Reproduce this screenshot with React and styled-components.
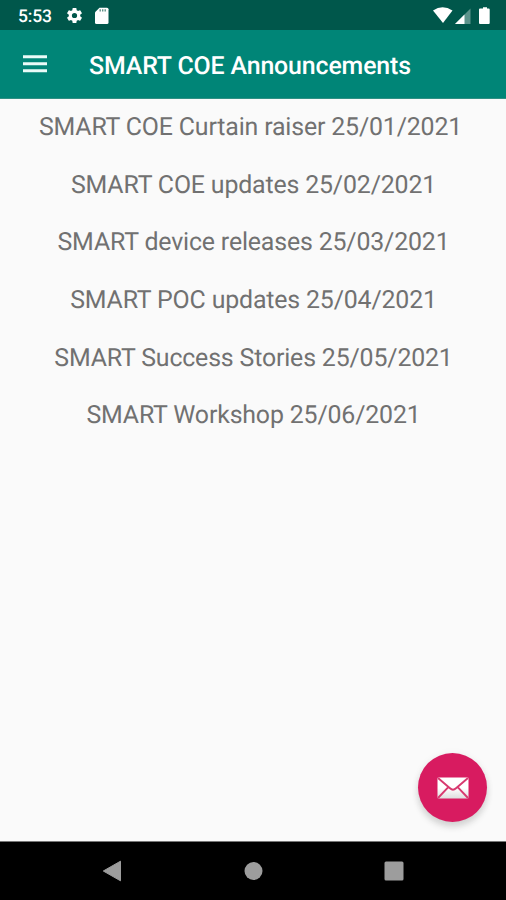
import React from "react";
import styled, { createGlobalStyle } from "styled-components";

const GlobalStyle = createGlobalStyle`
  * { box-sizing: border-box; }
  body {
    margin: 0;
    background: #fafafa;
    font-family: Roboto, "Noto Sans", sans-serif;
    text-rendering: geometricPrecision;
  }
`;

const Screen = styled.div`
  display: flex;
  flex-direction: column;
  width: 506px;
  height: 900px;
  overflow: hidden;
  background: #fafafa;
`;

const StatusBar = styled.header`
  flex: none;
  display: flex;
  align-items: center;
  justify-content: space-between;
  height: 30px;
  padding: 1px 15px 0 18px;
  background: #00574b;
  color: #fff;
`;

const StatusGroup = styled.div`
  display: flex;
  align-items: center;
  svg { display: block; }
`;

const Clock = styled.span`
  width: 46.5px;
  padding-top: 2px;
  font-size: 17.5px;
  font-weight: 500;
  line-height: 20px;
  letter-spacing: -0.2px;
`;

const AppBar = styled.div`
  flex: none;
  display: flex;
  align-items: center;
  height: 69px;
  padding: 2px 23px 0;
  background: #008577;
  border-bottom: 1px solid #2f9084;
`;

const MenuButton = styled.button`
  width: 66px;
  height: 24px;
  padding: 0;
  border: 0;
  background: none;
  svg { display: block; }
`;

const Title = styled.h1`
  margin: 0;
  padding-top: 3px;
  color: #fff;
  font-size: 24.9px;
  font-weight: 500;
  line-height: 32px;
  letter-spacing: -0.13px;
  white-space: nowrap;
`;

const List = styled.ul`
  flex: 1;
  margin: 0;
  padding: 0;
  list-style: none;
`;

const Item = styled.li`
  height: 57.6px;
  padding: 13.3px 0 0 1px;
  color: #717171;
  font-size: 24.9px;
  line-height: 32px;
  letter-spacing: -0.16px;
  text-align: center;
  white-space: break-spaces;
`;

const NavBar = styled.nav`
  flex: none;
  display: flex;
  align-items: center;
  justify-content: space-between;
  height: 59px;
  padding: 0 102px 0 101px;
  border-top: 1px solid #777;
  background: #000;
  svg { display: block; }
`;

const Fab = styled.button`
  position: absolute;
  left: 418px;
  top: 753px;
  display: grid;
  place-items: center;
  width: 69px;
  height: 69px;
  padding: 0;
  border: 0;
  border-radius: 50%;
  background: #d81b60;
  box-shadow: 0 5px 7px rgba(0, 0, 0, 0.14), 0 1px 8px rgba(0, 0, 0, 0.06);
`;

const announcements = [
  "SMART COE Curtain raiser 25/01/2021 ",
  "SMART COE updates 25/02/2021",
  "SMART device releases 25/03/2021",
  "SMART POC updates 25/04/2021",
  "SMART Success Stories 25/05/2021",
  "SMART Workshop 25/06/2021",
];

const GearIcon = () => (
  <svg width="19" height="19" viewBox="0 0 24 24" fill="#fff">
    <path d="M19.14 12.94c.04-.3.06-.61.06-.94s-.02-.64-.07-.94l2.03-1.58a.49.49 0 0 0 .12-.61l-1.92-3.32a.49.49 0 0 0-.59-.22l-2.39.96a7 7 0 0 0-1.62-.94l-.36-2.54A.48.48 0 0 0 13.92 2.4h-3.84a.48.48 0 0 0-.48.41l-.36 2.54a7 7 0 0 0-1.62.94l-2.39-.96a.49.49 0 0 0-.59.22L2.72 8.87a.48.48 0 0 0 .12.61l2.03 1.58a7 7 0 0 0 0 1.88l-2.03 1.58a.49.49 0 0 0-.12.61l1.92 3.32c.12.22.37.29.59.22l2.39-.96c.5.38 1.03.7 1.62.94l.36 2.54c.05.24.24.41.48.41h3.84c.24 0 .44-.17.48-.41l.36-2.54a7 7 0 0 0 1.62-.94l2.39.96c.22.08.47 0 .59-.22l1.92-3.32a.48.48 0 0 0-.12-.61zM12 15.3a3.3 3.3 0 1 1 0-6.6 3.3 3.3 0 0 1 0 6.6z" />
  </svg>
);

const CardIcon = () => (
  <svg width="32" height="18" viewBox="0 0 32 18">
    <path d="M15.500 0.800H23q1.500 0 1.500 1.500v13.200q0 1.500-1.500 1.500H12.500q-1.500 0-1.500-1.500V5.300z" fill="#fff" />
    <path d="M16.200 2.200v2.200M18.700 2.200v2.200M21.200 2.200v2.200" stroke="#5f9187" strokeWidth="1.400" />
  </svg>
);

const SignalIcons = () => (
  <svg width="58" height="20" viewBox="0 0 58 20">
    <path d="M0 4.500Q9.500-2 19.500 4.500L10 17z" fill="#fff" />
    <path d="M37.500 2.500v15.500H22z" fill="#5c938b" />
    <path d="M31.500 8.500V18H22z" fill="#fff" />
    <path d="M48.500 2.500h1.500V1.200h4v1.300h1.700q1 0 1 1V17q0 1-1 1H47q-1 0-1-1V3.500q0-1 1-1z" fill="#fff" />
  </svg>
);

const MenuIcon = () => (
  <svg width="24" height="24" viewBox="0 0 24 24" fill="#e9fbf8">
    <path d="M0 2.300h24v3H0zM0 9.300h24v3H0zM0 16.300h24v3H0z" />
  </svg>
);

const MailIcon = () => (
  <svg width="32" height="22" viewBox="0 0 32 22">
    <defs>
      <linearGradient id="paper" x1="0" y1="0" x2="0" y2="1">
        <stop offset="0.5" stopColor="#fff" />
        <stop offset="1" stopColor="#dedede" />
      </linearGradient>
    </defs>
    <rect x="0.500" y="0.500" width="31" height="21" rx="1" fill="url(#paper)" />
    <path d="M1 1L13 11.300Q16 14 19 11.300L31 1M1 21L11.300 10.200M31 21L20.700 10.200" fill="none" stroke="#d8396f" strokeWidth="1.900" />
  </svg>
);

const BackIcon = () => (
  <svg width="21" height="22" viewBox="0 0 21 22">
    <path d="M2.300 11L19.500 1.200v19.600z" fill="#9d9d9d" stroke="#9d9d9d" strokeLinejoin="round" />
  </svg>
);

const HomeIcon = () => (
  <svg width="20" height="20" viewBox="0 0 20 20">
    <circle cx="10.500" cy="10" r="9" fill="#9d9d9d" />
  </svg>
);

const RecentsIcon = () => (
  <svg width="20" height="20" viewBox="0 0 20 20">
    <rect x="0.500" y="0.500" width="19" height="19" rx="1.500" fill="#9d9d9d" />
  </svg>
);

export default function App() {
  return (
    <Screen>
      <GlobalStyle />
      <StatusBar>
        <StatusGroup>
          <Clock>5:53</Clock>
          <GearIcon />
          <CardIcon />
        </StatusGroup>
        <StatusGroup>
          <SignalIcons />
        </StatusGroup>
      </StatusBar>
      <AppBar>
        <MenuButton aria-label="Open menu"><MenuIcon /></MenuButton>
        <Title>SMART COE Announcements</Title>
      </AppBar>
      <List>
        {announcements.map((text) => <Item key={text}>{text}</Item>)}
      </List>
      <Fab aria-label="Send mail"><MailIcon /></Fab>
      <NavBar>
        <BackIcon />
        <HomeIcon />
        <RecentsIcon />
      </NavBar>
    </Screen>
  );
}
